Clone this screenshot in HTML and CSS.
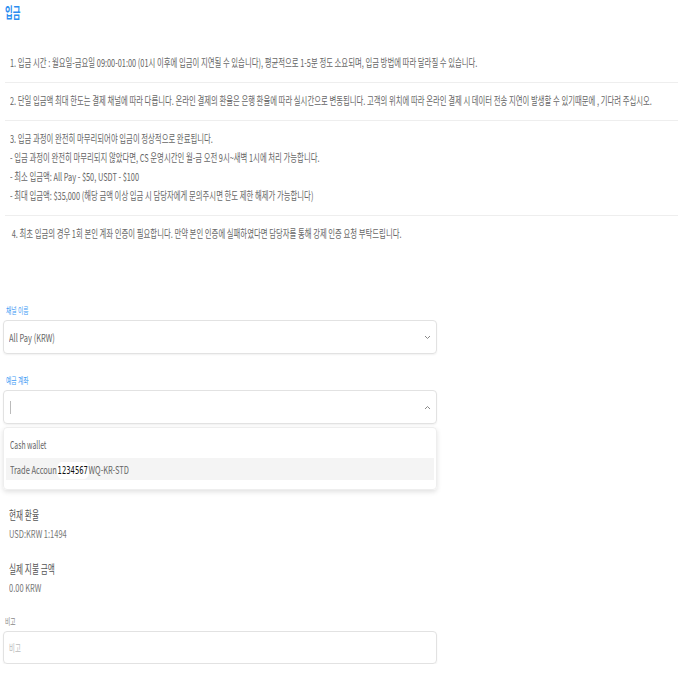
FILE: index.html
```html
<!DOCTYPE html>
<html>
<head>
    <title>입금</title>
    <link rel="stylesheet" href="styles.css">
</head>
<body>
    <h1 class="title"><span class="sq">입금</span></h1>

    <div class="notice">
        <div class="notice-item"><span class="sq">1. 입금 시간 : 월요일-금요일 09:00-01:00 (01시 이후에 입금이 지연될 수 있습니다), 평균적으로 1-5분 정도 소요되며, 입금 방법에 따라 달라질 수 있습니다.</span></div>
        <div class="notice-item"><span class="sq">2. 단일 입금액 최대 한도는 결제 채널에 따라 다릅니다. 온라인 결제의 환율은 은행 환율에 따라 실시간으로 변동됩니다. 고객의 위치에 따라 온라인 결제 시 데이터 전송 지연이 발생할 수 있기때문에 , 기다려 주십시오.</span></div>
        <div class="notice-item"><span class="sq">3. 입금 과정이 완전히 마무리되어야 입금이 정상적으로 완료됩니다.<br>
            - 입금 과정이 완전히 마무리되지 않았다면, CS 운영시간인 월-금 오전 9시~새벽 1시에 처리 가능합니다.<br>
            - 최소 입금액: All Pay - $50, USDT - $100<br>
            - 최대 입금액: $35,000 (해당 금액 이상 입금 시 담당자에게 문의주시면 한도 제한 해제가 가능합니다)</span></div>
        <div class="notice-item last"><span class="sq">&nbsp;4. 최초 입금의 경우 1회 본인 계좌 인증이 필요합니다. 만약 본인 인증에 실패하였다면 담당자를 통해 강제 인증 요청 부탁드립니다.</span></div>
    </div>

    <div class="form">
        <label class="field-label"><span class="sq">채널 이름</span></label>
        <div class="select">
            <span class="sq latin">All Pay (KRW)</span>
            <svg class="chev" width="7" height="5" viewBox="0 0 7 5"><path d="M1 1 L3.5 3.5 L6 1" fill="none" stroke="#888" stroke-width="1"/></svg>
        </div>

        <label class="field-label second"><span class="sq">예금 계좌</span></label>
        <div class="select open">
            <span class="cursor"></span>
            <svg class="chev" width="7" height="5" viewBox="0 0 7 5"><path d="M1 4 L3.5 1.5 L6 4" fill="none" stroke="#888" stroke-width="1"/></svg>
        </div>
        <div class="dropdown">
            <div class="option"><span class="sq latin narrow">Cash wallet</span></div>
            <div class="option active"><span class="sq latin">Trade Accoun<span class="mask">1234567</span>WQ-KR-STD</span></div>
        </div>

        <div class="info">
            <div class="info-label"><span class="sq">현재 환율</span></div>
            <div class="info-value"><span class="sq latin">USD:KRW 1:1494</span></div>
        </div>
        <div class="info">
            <div class="info-label"><span class="sq">실제 지불 금액</span></div>
            <div class="info-value"><span class="sq latin">0.00 KRW</span></div>
        </div>

        <label class="field-label plain"><span class="sq">비고</span></label>
        <div class="input"><span class="sq placeholder">비고</span></div>
    </div>
</body>
</html>
```

FILE: styles.css
```css
body {
    margin: 0;
    padding: 0 0 0 3px;
    font-family: "Noto Sans CJK KR", "Noto Sans", sans-serif;
    color: #666;
    background: #fff;
    overflow-x: hidden;
}
/* the source UI renders its text horizontally condensed */
.sq {
    display: inline-block;
    white-space: nowrap;
    transform: scaleX(0.64);
    transform-origin: 0 50%;
}
.sq.latin {
    transform: scaleX(0.68);
}
.sq.latin.narrow {
    transform: scaleX(0.62);
}
.title {
    margin: 0;
    padding: 2px 0 0 2px;
    font-size: 15px;
    line-height: 20px;
    font-weight: bold;
    color: #2a8df0;
}
.title .sq {
    transform: scaleX(0.56);
}
.notice {
    margin: 23px 0 0 2px;
}
.notice-item {
    padding: 8px 0 10px 5px;
    border-bottom: 1px solid #eee;
    font-size: 11px;
    line-height: 19px;
    color: #666;
    white-space: nowrap;
    overflow: hidden;
}
.notice-item .sq {
    transform: scaleX(0.67);
}
.notice-item.last {
    border-bottom: none;
}
.form {
    width: 434px;
    margin-top: 51px;
}
.field-label {
    display: block;
    font-size: 9px;
    line-height: 14px;
    color: #3d9bf5;
    padding-left: 3px;
    margin-bottom: 2px;
}
.field-label.second {
    margin-top: 20px;
}
.field-label.plain {
    color: #888;
    margin-top: 18px;
    padding-left: 2px;
}
.select, .input {
    height: 32px;
    border: 1px solid #e2e2e2;
    border-radius: 4px;
    box-shadow: 0 1px 2px rgba(0, 0, 0, 0.06);
    display: flex;
    align-items: center;
    justify-content: space-between;
    padding: 0 5px;
    font-size: 11px;
    color: #666;
}
.input {
    height: 31px;
}
.cursor {
    width: 1px;
    height: 13px;
    background: #bbb;
    margin-left: 1px;
}
.dropdown {
    margin-top: 3px;
    border: 1px solid #eee;
    border-radius: 4px;
    box-shadow: 0 2px 5px rgba(0, 0, 0, 0.12);
    padding: 5px 2px 9px;
}
.option {
    height: 22px;
    line-height: 22px;
    padding-left: 4px;
    font-size: 11px;
    color: #666;
}
.option.active {
    background: #f4f4f4;
    margin-top: 3px;
}
.mask {
    background: #fff;
    color: #111;
    border-radius: 7px;
    padding: 3px 1px;
    font-family: "DejaVu Sans", sans-serif;
    font-size: 10px;
}
.info {
    padding-left: 6px;
    margin-top: 15px;
}
.info + .info {
    margin-top: 16px;
}
.info-label {
    font-size: 12px;
    line-height: 19px;
    color: #555;
}
.info-value {
    font-size: 11px;
    line-height: 19px;
    color: #777;
}
.placeholder {
    color: #bbb;
    font-size: 10px;
}
```
